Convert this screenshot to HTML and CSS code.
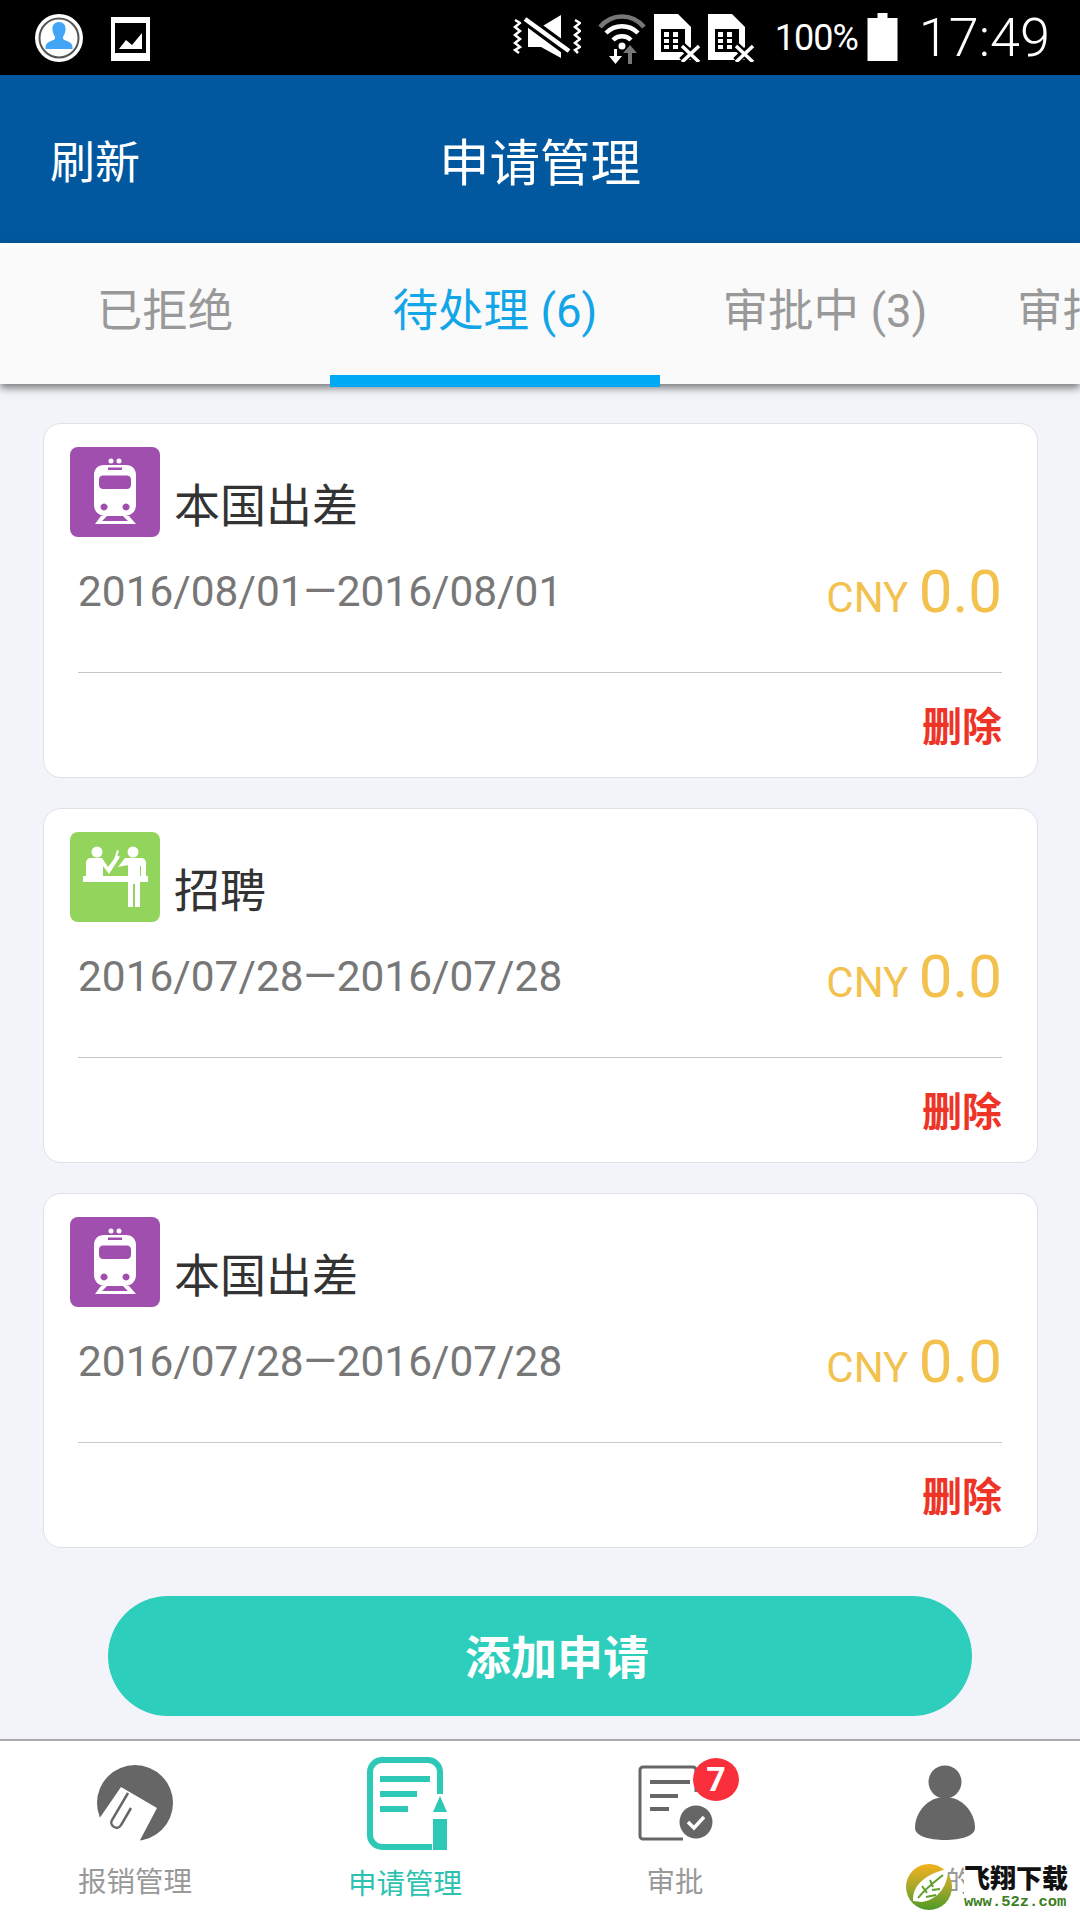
FILE: index.html
```html
<!DOCTYPE html>
<html lang="zh">
<head>
<meta charset="utf-8">
<title>申请管理</title>
<link rel="stylesheet" href="styles.css">
</head>
<body>
<div class="page">
  <div class="status">
    <svg class="s-avatar" viewBox="0 0 52 52"><circle cx="26" cy="26" r="24" fill="#fff"/><circle cx="26" cy="26" r="19.500" fill="#fff" stroke="#555" stroke-width="2"/><path d="M26 10c-5 0-7 4-6.500 8 .3 3 1.500 5 2.500 7 .5 2-1 3-4 4-3 1-5.500 3-5.500 6v2h27v-2c0-3-2.500-5-5.500-6-3-1-4.500-2-4-4 1-2 2.200-4 2.500-7 .5-4-1.500-8-6.500-8z" fill="#42a5f5"/></svg>
    <svg class="s-pic" viewBox="0 0 39 44"><path d="M0 0h39v44H0z" fill="#fff"/><path d="M4 6h31v30H4z" fill="#000"/><path d="M8 32l7-9 6 5 10-12v16z" fill="#fff"/></svg>
    <div class="s-right">
      <svg class="s-mute" viewBox="0 0 68 46"><g fill="none" stroke="#fff" stroke-width="2.500"><path d="M2 5l5 3-5 4 5 4-5 4 5 4-5 4 5 4-5 3 4 3"/><path d="M62 5l5 3-5 4 5 4-5 4 5 4-5 4 5 4-5 3 3 3"/></g><path d="M15 12h13L48 0v43L28 32H15z" fill="#fff"/><path d="M11 3l46 34" stroke="#000" stroke-width="11"/><path d="M12 4l44 32" stroke="#fff" stroke-width="4.500"/></svg>
      <svg class="s-wifi" viewBox="0 0 48 52"><g fill="none" stroke-width="4.500"><path d="M2 15C14 1 34 1 46 15" stroke="#777"/><path d="M8 21c9-9 23-9 32 0" stroke="#fff"/><path d="M15 28c5-5 13-5 18 0" stroke="#fff"/></g><circle cx="24" cy="34" r="3.500" fill="#fff"/><path d="M16 37v7h-5l6.500 8 6.500-8h-5v-7z" fill="#fff"/><path d="M30 52V41h-5l7-8 7 8h-5v11z" fill="#777"/></svg>
      <svg class="s-sim" viewBox="0 0 47 48"><path d="M0 0h24l13 13v33H0z" fill="#fff"/><path d="M7 15h24v23H7z" fill="#000"/><path d="M10 18h5v5h-5zM10 25h5v4h-5zM10 31h5v4h-5zM19 18h5v5h-5zM19 25h5v4h-5zM19 31h5v4h-5z" fill="#fff"/><path d="M28 32l16 15M44 32L28 47" stroke="#000" stroke-width="8"/><path d="M28 32l17 16M45 32L28 48" stroke="#fff" stroke-width="3.500"/></svg>
      <svg class="s-sim s-sim2" viewBox="0 0 47 48"><path d="M0 0h24l13 13v33H0z" fill="#fff"/><path d="M7 15h24v23H7z" fill="#000"/><path d="M10 18h5v5h-5zM10 25h5v4h-5zM10 31h5v4h-5zM19 18h5v5h-5zM19 25h5v4h-5zM19 31h5v4h-5z" fill="#fff"/><path d="M28 32l16 15M44 32L28 47" stroke="#000" stroke-width="8"/><path d="M28 32l17 16M45 32L28 48" stroke="#fff" stroke-width="3.500"/></svg>
      <span class="s-pct">100%</span>
      <svg class="s-batt" viewBox="0 0 30 48"><path d="M10 0h10v5h10v43H0V5h10z" fill="#fff"/></svg>
      <span class="s-time">17:49</span>
    </div>
  </div>

  <header class="top">
    <span class="refresh">刷新</span>
    <h1 class="title">申请管理</h1>
  </header>

  <nav class="tabs">
    <div class="tab">已拒绝</div>
    <div class="tab active">待处理 (6)</div>
    <div class="tab">审批中 (3)</div>
    <div class="tab">审批通过 (12)</div>
  </nav>

  <main class="list">
    <article class="card">
      <div class="card-head">
        <svg class="cat" viewBox="0 0 90 90"><rect width="90" height="90" rx="8" fill="#a04fae"/><use href="#train"/></svg>
        <span class="cat-name">本国出差</span>
      </div>
      <div class="card-mid">
        <span class="date">2016/08/01—2016/08/01</span>
        <span class="money"><span class="cur">CNY</span> <span class="amt">0.0</span></span>
      </div>
      <div class="card-foot"><span class="del">删除</span></div>
    </article>

    <article class="card">
      <div class="card-head">
        <svg class="cat cat-green" viewBox="0 0 90 90"><rect width="90" height="90" rx="8" fill="#93d45c"/><g fill="#fff"><circle cx="27" cy="20" r="5.500"/><path d="M16 44V31c0-3 2-5 5-5h11l6 9 9-12 3 2-11 17-6-8v10z"/><path d="M13 44h65v6H13z"/><circle cx="63" cy="20" r="5.500"/><path d="M48 35l7-9h16c3 0 5 2 5 5v13h-5V34h-1v41h-5V52h-2v23h-5V33z"/><path d="M44 27l3-9 2 1-3 8z"/></g></svg>
        <span class="cat-name">招聘</span>
      </div>
      <div class="card-mid">
        <span class="date">2016/07/28—2016/07/28</span>
        <span class="money"><span class="cur">CNY</span> <span class="amt">0.0</span></span>
      </div>
      <div class="card-foot"><span class="del">删除</span></div>
    </article>

    <article class="card">
      <div class="card-head">
        <svg class="cat" viewBox="0 0 90 90"><rect width="90" height="90" rx="8" fill="#a04fae"/><use href="#train"/></svg>
        <span class="cat-name">本国出差</span>
      </div>
      <div class="card-mid">
        <span class="date">2016/07/28—2016/07/28</span>
        <span class="money"><span class="cur">CNY</span> <span class="amt">0.0</span></span>
      </div>
      <div class="card-foot"><span class="del">删除</span></div>
    </article>

    <button class="add">添加申请</button>
  </main>

  <footer class="bar">
    <div class="item">
      <svg class="nav-ic" viewBox="0 0 100 100"><circle cx="50" cy="51" r="38" fill="#666"/><path d="M36 35l36 21-19 36H0V70l14-3z" fill="#fff"/><path d="M43 41L27 68a5 5 0 0 0 9 5l10-17" fill="none" stroke="#666" stroke-width="2.500"/></svg>
      <span class="lbl">报销管理</span>
    </div>
    <div class="item on">
      <svg class="nav-ic" viewBox="0 0 100 100"><path d="M85 42V20a12 12 0 0 0-12-12H27a12 12 0 0 0-12 12v63a12 12 0 0 0 12 12h50" fill="none" stroke="#2dc9b6" stroke-width="6"/><path d="M25 24h50v6H25zM25 39h37v6H25zM25 54h28v6H25zM78 67h14v31H78zM85 44l7 16H78z" fill="#2dc9b6"/></svg>
      <span class="lbl">申请管理</span>
    </div>
    <div class="item">
      <svg class="nav-ic" viewBox="0 0 100 100"><path d="M71 40v-22a3 3 0 0 0-3-3H18a3 3 0 0 0-3 3v66a3 3 0 0 0 3 3h40" fill="none" stroke="#666" stroke-width="3"/><path d="M25 28h40v4H25zM25 42h28v4H25zM25 55h19v4H25z" fill="#666"/><circle cx="71" cy="70" r="16.500" fill="#666"/><path d="M63 70l6 6 10-11" fill="none" stroke="#fff" stroke-width="3.500"/></svg>
      <span class="badge">7</span>
      <span class="lbl">审批</span>
    </div>
    <div class="item">
      <svg class="nav-ic" viewBox="0 0 100 100"><circle cx="50" cy="30" r="16.500" fill="#666"/><path d="M20 76c0-16 13-31 30-31s30 15 30 31c0 8-14 12-30 12s-30-4-30-12z" fill="#666"/></svg>
      <span class="lbl">我的</span>
    </div>
    <div class="mark">
      <svg class="mark-logo" viewBox="0 0 46 46"><defs><linearGradient id="lg" x1="0" y1="0" x2="0" y2="1"><stop offset="0" stop-color="#f4b01c"/><stop offset=".5" stop-color="#a7a82c"/><stop offset="1" stop-color="#4d9a26"/></linearGradient></defs><circle cx="23" cy="23" r="23" fill="url(#lg)"/><path d="M7 37C6 20 22 9 42 5c0 16-9 30-26 33z" fill="#fff"/><path d="M12 34c7-9 15-15 25-23M16 22l5 7M24 16l3 7M20 33l10-2M26 26l8-1" stroke="#5f9f2c" stroke-width="2" fill="none"/></svg>
      <div class="mark-text">
        <span class="mark-cn">飞翔下载</span>
        <span class="mark-url">www.52z.com</span>
      </div>
    </div>
  </footer>
</div>
<svg class="defs" width="0" height="0"><defs><g id="train" fill="#fff"><circle cx="41" cy="14" r="2.500"/><circle cx="49" cy="14" r="2.500"/><path fill-rule="evenodd" d="M34 18h22c6 0 10 4 10 10v30c0 6-4 10-10 11H34c-6-1-10-5-10-11V28c0-6 4-10 10-10zm4 2.500v2.500h14v-2.500zM33 28.500c-2 0-4 1.500-4 4V38c0 2.500 2 4 4 4h24c2 0 4-1.500 4-4v-5.500c0-2.500-2-4-4-4zM34 56.500a3.500 3.500 0 1 0 .1 0zM56 56.500a3.500 3.500 0 1 0 .1 0z"/><path d="M31 69h6l-5 5h26l-5-5h6l7 8H25z"/></g></defs></svg>
</body>
</html>
```

FILE: styles.css
```css
* { box-sizing: border-box; }
html, body { margin: 0; padding: 0; }
body { font-family: Roboto, "Noto Sans CJK SC", sans-serif; background: #f2f4f9; }
.page { width: 1080px; height: 1920px; display: flex; flex-direction: column; overflow: hidden; }
.defs { display: block; }

.status { height: 75px; flex: none; background: #000; display: flex; align-items: center; padding-left: 33px; color: #fff; }
.s-avatar { width: 52px; height: 52px; flex: none; }
.s-pic { width: 39px; height: 44px; margin-left: 26px; margin-top: 2px; flex: none; }
.s-right { margin-left: auto; display: flex; align-items: center; padding-right: 30px; }
.s-mute { width: 68px; height: 46px; margin-right: 17px; }
.s-wifi { width: 48px; height: 52px; margin-right: 8px; }
.s-sim { width: 47px; height: 48px; }
.s-sim2 { margin-left: 7px; }
.s-pct { font-size: 36px; margin-left: 20px; width: 92px; letter-spacing: -1px; white-space: nowrap; }
.s-batt { width: 31px; height: 48px; margin-top: -2px; }
.s-time { font-size: 54px; font-weight: 300; margin-left: 21px; line-height: 75px; }

.top { height: 168px; flex: none; background: #02589f; position: relative; display: flex; align-items: center; justify-content: center; color: #fff; }
.refresh { position: absolute; left: 50px; font-size: 45px; }
.title { margin: 0; font-size: 50.500px; font-weight: 400; }

.tabs { height: 141px; flex: none; display: flex; align-items: flex-start; background: #fafafa; border-top: 4px solid #fff; box-shadow: 0 4px 8px rgba(0,0,0,.5); position: relative; z-index: 1; }
.tab { flex: 0 0 330px; height: 140px; display: flex; align-items: center; justify-content: center; font-size: 45.500px; color: #999; padding-bottom: 8px; border-bottom: 12px solid transparent; white-space: nowrap; }
.tab.active { color: #12a5e8; border-bottom-color: #00a9f4; }

.list { flex: none; padding: 39px 42px 0 43px; display: flex; flex-direction: column; }
.card { flex: none; height: 355px; background: #fff; border: 1.500px solid #dfe1e8; border-radius: 18px; margin-bottom: 30px; padding: 23px 35px 0 26px; display: flex; flex-direction: column; }
.card-head { flex: none; display: flex; align-items: center; gap: 14px; height: 90px; }
.cat { width: 90px; height: 90px; flex: none; }
.cat-name { font-size: 46px; color: #333; padding-top: 20px; }
.card-mid { flex: none; height: 136px; margin-left: 8px; display: flex; justify-content: space-between; align-items: flex-start; border-bottom: 1.500px solid #c8c8cc; }
.date { font-size: 42.400px; color: #777; line-height: 50px; margin-top: 30px; }
.money { color: #f2c14e; line-height: 70px; margin-top: 20px; font-size: 42px; }
.cur { font-size: 42px; }
.amt { font-size: 60px; }
.card-foot { display: flex; justify-content: flex-end; padding-top: 27px; }
.del { font-size: 40px; color: #ee3427; font-weight: 700; line-height: 56px; }

.add { flex: none; width: 864px; height: 120px; margin: 18px 0 0 65px; border: 0; border-radius: 60px; background: #2dcebb; color: #fff; font: 700 46px Roboto, "Noto Sans CJK SC", sans-serif; padding: 0 0 4px 34px; }

.bar { margin-top: auto; height: 181px; flex: none; background: #fff; border-top: 2px solid #aaa; display: grid; grid-template-columns: repeat(4, 270px); position: relative; }
.item { display: flex; flex-direction: column; align-items: center; padding-top: 11px; position: relative; color: #999; }
.nav-ic { width: 100px; height: 100px; flex: none; }
.lbl { font-size: 28.500px; line-height: 40px; margin-top: 11px; }
.item.on .lbl { color: #2dc2b0; margin-top: 13px; }
.badge { position: absolute; left: calc(50% + 18px); top: 17px; width: 46px; height: 43px; border-radius: 50%; background: #f9303c; color: #fff; font-size: 34px; font-weight: 700; line-height: 43px; text-align: center; }

.mark { position: absolute; left: 906px; top: 121px; display: flex; align-items: center; gap: 12px; }
.mark-logo { width: 46px; height: 46px; flex: none; }
.mark-text { display: flex; flex-direction: column; background: #fff; padding: 4px 0 0; width: 106px; }
.mark-cn { font-size: 26px; line-height: 27px; font-weight: 900; color: #111; white-space: nowrap; }
.mark-url { font-family: "Liberation Mono", monospace; font-weight: 700; font-size: 15.500px; line-height: 18px; color: #3c7d22; white-space: nowrap; }
```
